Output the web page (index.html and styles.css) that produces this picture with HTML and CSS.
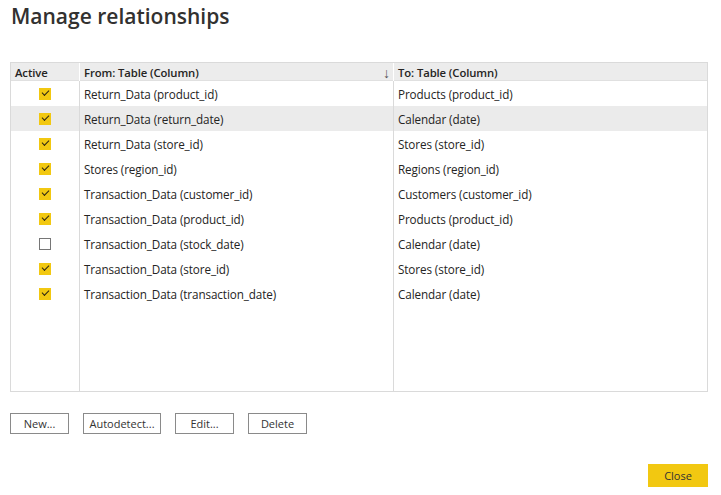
FILE: index.html
```html
<!DOCTYPE html>
<html>
<head>
<meta charset="utf-8">
<link rel="stylesheet" href="styles.css">
</head>
<body>
<div class="dialog">
  <h1 class="title">Manage relationships</h1>
  <div class="grid">
    <div class="row head">
      <div class="c1">Active</div>
      <div class="c2"><span>From: Table (Column)</span><span class="sort">↓</span></div>
      <div class="c3">To: Table (Column)</div>
    </div>
    <div class="row"><div class="c1"><span class="cb on"></span></div><div class="c2">Return_Data (product_id)</div><div class="c3">Products (product_id)</div></div>
    <div class="row sel"><div class="c1"><span class="cb on"></span></div><div class="c2">Return_Data (return_date)</div><div class="c3">Calendar (date)</div></div>
    <div class="row"><div class="c1"><span class="cb on"></span></div><div class="c2">Return_Data (store_id)</div><div class="c3">Stores (store_id)</div></div>
    <div class="row"><div class="c1"><span class="cb on"></span></div><div class="c2">Stores (region_id)</div><div class="c3">Regions (region_id)</div></div>
    <div class="row"><div class="c1"><span class="cb on"></span></div><div class="c2">Transaction_Data (customer_id)</div><div class="c3">Customers (customer_id)</div></div>
    <div class="row"><div class="c1"><span class="cb on"></span></div><div class="c2">Transaction_Data (product_id)</div><div class="c3">Products (product_id)</div></div>
    <div class="row"><div class="c1"><span class="cb"></span></div><div class="c2">Transaction_Data (stock_date)</div><div class="c3">Calendar (date)</div></div>
    <div class="row"><div class="c1"><span class="cb on"></span></div><div class="c2">Transaction_Data (store_id)</div><div class="c3">Stores (store_id)</div></div>
    <div class="row"><div class="c1"><span class="cb on"></span></div><div class="c2">Transaction_Data (transaction_date)</div><div class="c3">Calendar (date)</div></div>
    <div class="row fill"><div class="c1"></div><div class="c2"></div><div class="c3"></div></div>
  </div>
  <div class="actions">
    <button class="btn w59">New...</button>
    <button class="btn w78">Autodetect...</button>
    <button class="btn w59">Edit...</button>
    <button class="btn w59">Delete</button>
  </div>
  <div class="footer">
    <button class="close">Close</button>
  </div>
</div>
</body>
</html>
```
FILE: styles.css
```css
html, body { margin: 0; padding: 0; background: #fff; }
body { font-family: "Open Sans", "Noto Sans", sans-serif; color: #252423; font-size: 11.7px; }
.dialog { width: 721px; height: 495px; padding: 0 13px 0 10px; box-sizing: border-box; }
.title { margin: 0; padding: 3px 0 0 1px; height: 58px; box-sizing: border-box; font-size: 21px; font-weight: 600; color: #323130; letter-spacing: 0; line-height: 26px; }
.grid { display: flex; flex-direction: column; border: 1px solid #dadada; height: 330px; box-sizing: border-box; margin-top: 4px; }
.row { display: grid; grid-template-columns: 69px 314px 1fr; height: 25px; }
.row > div { display: flex; align-items: center; padding-left: 4px; white-space: nowrap; letter-spacing: -0.1px; }
.row .c1 { justify-content: center; padding-left: 0; border-right: 1px solid #dadada; }
.row .c2 { border-right: 1px solid #dadada; }
.head { height: 17px; background: #ececec; border-bottom: 1px solid #e0e0e0; font-weight: 600; font-size: 11.3px; }
.head .c1 { justify-content: flex-start; padding-left: 4px; border-right-color: #fff; }
.head .c2 { justify-content: space-between; border-right-color: #fff; }
.sort { font-weight: 400; font-size: 14px; color: #555; padding-right: 3px; }
.sel { background: #ebebeb; }
.fill { flex: 1; }
.cb { width: 10px; height: 10px; border: 1px solid #767676; background: #fff; position: relative; }
.cb.on { width: 12px; height: 12px; border: none; background: #f2c811; }
.cb.on::after { content: ""; position: absolute; left: 3px; top: 2.5px; width: 6px; height: 3px; border-left: 1.6px solid #2b2515; border-bottom: 1.6px solid #2b2515; transform: rotate(-45deg); }
.actions { display: flex; gap: 14px; margin-top: 21px; }
.btn { height: 21px; border: 1px solid #8a8a8a; background: #fff; font-family: inherit; font-size: 11px; color: #333; padding: 0; }
.w59 { width: 59px; }
.w78 { width: 78px; }
.footer { display: flex; justify-content: flex-end; margin-top: 30px; }
.close { width: 60px; height: 23px; border: none; background: #f2c811; font-family: inherit; font-size: 11px; color: #333; padding: 0; }
```
